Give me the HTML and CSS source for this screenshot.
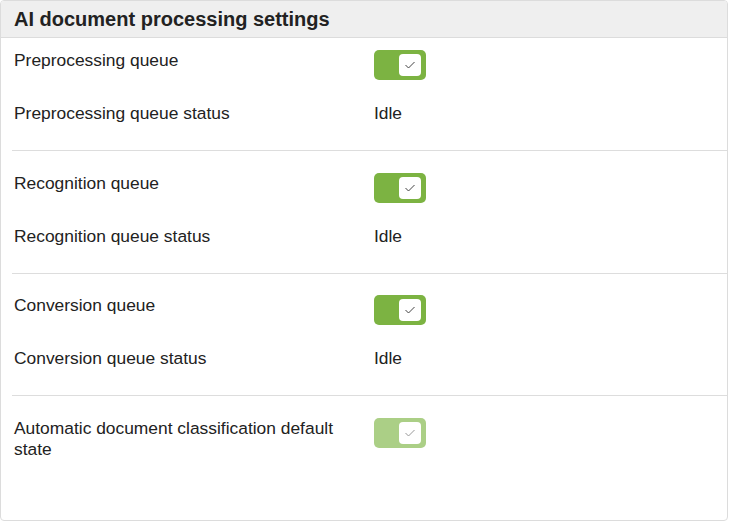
FILE: index.html
```html
<!DOCTYPE html>
<html lang="en">
<head>
    <meta charset="UTF-8">
    <title>AI document processing settings</title>
    <link rel="stylesheet" href="styles.css">
</head>
<body>
<div class="panel">
    <div class="panel-header">AI document processing settings</div>
    <div class="panel-body">
        <div class="group">
            <div class="row">
                <div class="row-label">Preprocessing queue</div>
                <div class="row-value">
                    <span class="toggle on"><span class="knob"><svg viewBox="0 0 12 10" width="12" height="10"><path d="M1.5 5 L4.5 8 L10.5 2" /></svg></span></span>
                </div>
            </div>
            <div class="row">
                <div class="row-label">Preprocessing queue status</div>
                <div class="row-value">Idle</div>
            </div>
        </div>
        <div class="group">
            <div class="row">
                <div class="row-label">Recognition queue</div>
                <div class="row-value">
                    <span class="toggle on"><span class="knob"><svg viewBox="0 0 12 10" width="12" height="10"><path d="M1.5 5 L4.5 8 L10.5 2" /></svg></span></span>
                </div>
            </div>
            <div class="row">
                <div class="row-label">Recognition queue status</div>
                <div class="row-value">Idle</div>
            </div>
        </div>
        <div class="group">
            <div class="row">
                <div class="row-label">Conversion queue</div>
                <div class="row-value">
                    <span class="toggle on"><span class="knob"><svg viewBox="0 0 12 10" width="12" height="10"><path d="M1.5 5 L4.5 8 L10.5 2" /></svg></span></span>
                </div>
            </div>
            <div class="row">
                <div class="row-label">Conversion queue status</div>
                <div class="row-value">Idle</div>
            </div>
        </div>
        <div class="group">
            <div class="row">
                <div class="row-label">Automatic document classification default state</div>
                <div class="row-value">
                    <span class="toggle on disabled"><span class="knob"><svg viewBox="0 0 12 10" width="12" height="10"><path d="M1.5 5 L4.5 8 L10.5 2" /></svg></span></span>
                </div>
            </div>
        </div>
    </div>
</div>
</body>
</html>
```

FILE: styles.css
```css
* {
    box-sizing: border-box;
    margin: 0;
    padding: 0;
}

body {
    font-family: "Liberation Sans", Arial, sans-serif;
    color: #222;
    background-color: white;
}

.panel {
    width: 728px;
    height: 521px;
    border: 1px solid #dcdcdc;
    border-radius: 4px;
    overflow: hidden;
}

.panel-header {
    height: 37px;
    padding: 6px 13px 0;
    background-color: #efefef;
    border-bottom: 1px solid #dcdcdc;
    font-size: 20px;
    font-weight: 700;
    line-height: 24px;
}

.panel-body {
    padding: 12px 0 0 11px;
}

/* each queue block ends with a divider */
.group {
    padding: 0 0 26px 2px;
    border-bottom: 1px solid #dddddd;
    margin-bottom: 21.5px;
}

.group:last-child {
    border-bottom: none;
}

.row {
    display: flex;
    align-items: flex-start;
    font-size: 17.4px;
    line-height: 21px;
}

.row + .row {
    margin-top: 23px;
}

.row-label {
    width: 360px;
}

.row-value {
    flex: 1;
}

.toggle {
    display: flex;
    justify-content: flex-end;
    align-items: center;
    width: 52px;
    height: 30px;
    padding-right: 5px;
    border-radius: 5px;
    background-color: #7cb342;
}

.toggle.disabled {
    background-color: #abcf86;
}

.knob {
    display: flex;
    align-items: center;
    justify-content: center;
    width: 22px;
    height: 22px;
    border-radius: 4px;
    background-color: white;
}

.knob svg path {
    fill: none;
    stroke: #444;
    stroke-width: 1;
}

.toggle.disabled .knob svg path {
    stroke: #999;
}
```
